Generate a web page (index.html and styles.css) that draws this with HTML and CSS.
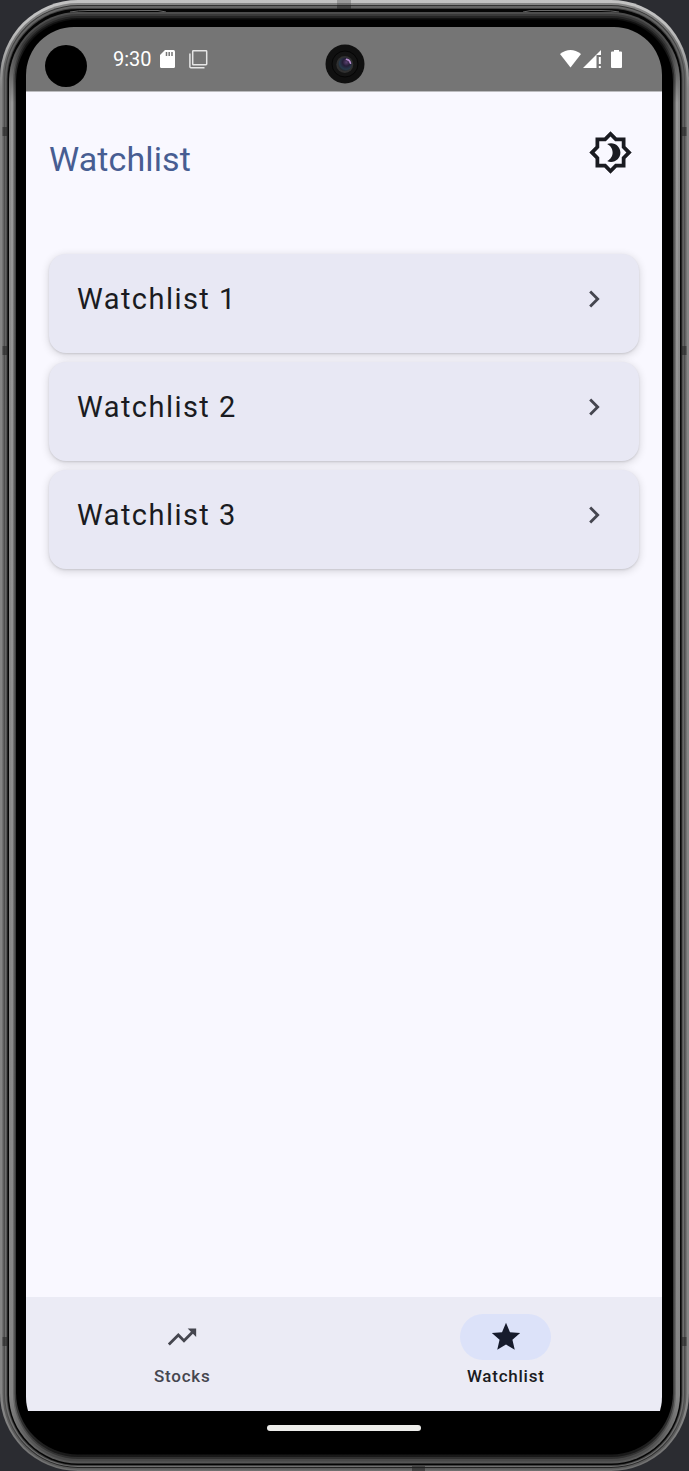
FILE: index.html
```html
<!DOCTYPE html>
<html lang="en">
<head>
<meta charset="utf-8">
<title>Watchlist</title>
<link rel="stylesheet" href="styles.css">
</head>
<body>
<div class="device">
  <svg class="bezel" width="689" height="1471" viewBox="0 0 689 1471" aria-hidden="true">
    <defs>
      <linearGradient id="g0" x2="0" y2="1471" gradientUnits="userSpaceOnUse"><stop offset="0" stop-color="#c2c2c2"/><stop offset=".02" stop-color="#bdbdbd"/><stop offset=".06" stop-color="#858585"/><stop offset=".96" stop-color="#858585"/><stop offset="1" stop-color="#6e6e6e"/></linearGradient>
      <linearGradient id="g1" x2="0" y2="1471" gradientUnits="userSpaceOnUse"><stop offset="0" stop-color="#888"/><stop offset=".05" stop-color="#646464"/><stop offset="1" stop-color="#5c5c5c"/></linearGradient>
      <linearGradient id="g2" x2="0" y2="1471" gradientUnits="userSpaceOnUse"><stop offset="0" stop-color="#303030"/><stop offset=".05" stop-color="#4e4e4e"/><stop offset=".96" stop-color="#4e4e4e"/><stop offset="1" stop-color="#222"/></linearGradient>
      <linearGradient id="g3" x2="0" y2="1471" gradientUnits="userSpaceOnUse"><stop offset="0" stop-color="#666"/><stop offset=".05" stop-color="#606060"/><stop offset="1" stop-color="#707070"/></linearGradient>
      <linearGradient id="g4" x2="0" y2="1471" gradientUnits="userSpaceOnUse"><stop offset="0" stop-color="#4c4c4c"/><stop offset=".03" stop-color="#4c4c4c"/><stop offset=".07" stop-color="#8c8c8c"/><stop offset=".95" stop-color="#858585"/><stop offset="1" stop-color="#505050"/></linearGradient>
      <linearGradient id="g5" x2="0" y2="1471" gradientUnits="userSpaceOnUse"><stop offset="0" stop-color="#383838"/><stop offset=".03" stop-color="#383838"/><stop offset=".07" stop-color="#999"/><stop offset=".95" stop-color="#858585"/><stop offset=".99" stop-color="#484848"/></linearGradient>
      <linearGradient id="g6" x2="0" y2="1471" gradientUnits="userSpaceOnUse"><stop offset="0" stop-color="#242424"/><stop offset=".03" stop-color="#242424"/><stop offset=".07" stop-color="#777"/><stop offset=".95" stop-color="#686868"/><stop offset=".99" stop-color="#303030"/></linearGradient>
      <linearGradient id="g7" x2="0" y2="1471" gradientUnits="userSpaceOnUse"><stop offset="0" stop-color="#101010"/><stop offset=".03" stop-color="#101010"/><stop offset=".07" stop-color="#444"/><stop offset=".95" stop-color="#3c3c3c"/><stop offset=".99" stop-color="#181818"/></linearGradient>
    </defs>
    <rect width="689" height="1471" rx="78" fill="url(#g0)"/>
    <rect x="2.5" y="3" width="684" height="1466.500" rx="75.500" fill="url(#g1)"/>
    <rect x="4" y="5" width="681" height="1463" rx="74" fill="url(#g2)"/>
    <rect x="5" y="6" width="679" height="1461" rx="73" fill="url(#g3)"/>
    <rect x="6.500" y="8" width="676" height="1458" rx="71.500" fill="#404040"/>
    <rect x="7.500" y="9" width="674" height="1456" rx="70.500" fill="#050505"/>
    <path d="M70 12Q78 10.500 88 10.500H158L166 12M619 12Q611 10.500 601 10.500H531L523 12" fill="none" stroke="#666" stroke-width="1"/>
    <rect x="9" y="12" width="671" height="1451.500" rx="69" fill="url(#g4)"/>
    <rect x="11" y="14" width="667" height="1447.500" rx="67" fill="url(#g5)"/>
    <rect x="13" y="16" width="663" height="1443" rx="65" fill="url(#g6)"/>
    <rect x="14.500" y="18" width="660" height="1439" rx="63" fill="url(#g7)"/>
    <rect x="16" y="19.500" width="657" height="1435" rx="62" fill="#000"/>
    <path d="M2.500 127h5v9h-5zM2.500 346h5v9h-5zM2.500 1337h5v9h-5zM681.500 127h5v9h-5zM681.500 346h5v9h-5zM681.500 1337h5v9h-5zM337 5h14v4h-14zM412 1466h13v5h-13z" fill="#222" fill-opacity=".55"/>
    <path d="M337 0h14v5h-14z" fill="#222" fill-opacity=".25"/>
  </svg>

  <div class="screen">
    <header class="status">
      <span class="cutout"></span>
      <span class="time">9:30</span>
      <svg class="sd" width="15" height="18" viewBox="0 0 15 18"><path d="M5 0h8.500Q15 0 15 1.500v15Q15 18 13.500 18h-12Q0 18 0 16.500V5z" fill="#fff"/><path d="M6.500 2v4M9.200 2v4M12 2v4" stroke="#757575" stroke-width="1.500"/></svg>
      <svg class="copy" width="19" height="19" viewBox="0 0 19 19" fill="none" stroke="#e6e6e6" stroke-width="1.500"><rect x="3.700" y=".8" width="14" height="14" rx=".7"/><path d="M.9 3.500v13.200q0 1 1 1H15.500"/></svg>
      <svg class="camera" width="40" height="40" viewBox="0 0 40 40">
        <defs>
          <radialGradient id="lens" cx=".6" cy=".35" r=".7"><stop offset="0" stop-color="#59406f"/><stop offset=".4" stop-color="#241e36"/><stop offset=".75" stop-color="#26394a"/><stop offset="1" stop-color="#222"/></radialGradient>
        </defs>
        <circle cx="20" cy="20" r="19.500" fill="#101010"/>
        <circle cx="20" cy="20" r="13" fill="#141414" stroke="#050505"/>
        <circle cx="19.800" cy="20.500" r="8.500" fill="#303030"/>
        <circle cx="20" cy="20.300" r="6.700" fill="url(#lens)"/>
        <path d="M21.500 15.300q3.500 .7 4 4" fill="none" stroke="#b58bcb" stroke-width="1.600" stroke-linecap="round"/>
      </svg>
      <svg class="signals" width="63" height="18" viewBox="0 0 63 18" fill="#fff"><path d="M0 4Q10.500-4 21 4L10.500 17.500z"/><path d="M23 18L41 0v5h-4.500v13z"/><path d="M38.800 7h2v7h-2zM38.800 16h2v2h-2z"/><path d="M51 2.500Q51 1.500 52 1.500h2V0h5v1.500h2q1 0 1 1V17q0 1-1 1h-9q-1 0-1-1z"/></svg>
    </header>

    <main class="content">
      <div class="titlebar">
        <h1 class="title">Watchlist</h1>
        <svg class="theme" width="45" height="45" viewBox="0 0 24 24" fill="#1a1b21"><path fill-rule="evenodd" d="M20 8.690V4h-4.690L12 .69 8.690 4H4v4.690L.69 12 4 15.310V20h4.690L12 23.310 15.310 20H20v-4.690L23.310 12zM18 14.480V18h-3.520L12 20.480 9.520 18H6v-3.520L3.520 12 6 9.520V6h3.520L12 3.520 14.480 6H18v3.520L20.480 12z"/><path d="M12.290 7c-.74 0-1.450.17-2.080.46 1.720.79 2.920 2.530 2.920 4.540s-1.200 3.750-2.920 4.540c.63.29 1.340.46 2.080.46 2.760 0 5-2.240 5-5s-2.240-5-5-5z"/></svg>
      </div>
      <div class="list">
        <div class="card"><span>Watchlist 1</span><svg width="34" height="34" viewBox="0 0 24 24"><path d="M10 6L8.590 7.410 13.170 12l-4.580 4.590L10 18l6-6z" fill="#45464f"/></svg></div>
        <div class="card"><span>Watchlist 2</span><svg width="34" height="34" viewBox="0 0 24 24"><path d="M10 6L8.590 7.410 13.170 12l-4.580 4.590L10 18l6-6z" fill="#45464f"/></svg></div>
        <div class="card"><span>Watchlist 3</span><svg width="34" height="34" viewBox="0 0 24 24"><path d="M10 6L8.590 7.410 13.170 12l-4.580 4.590L10 18l6-6z" fill="#45464f"/></svg></div>
      </div>
    </main>

    <nav class="nav">
      <div class="tab">
        <span class="pill"><svg width="34" height="34" viewBox="0 0 24 24"><path d="M16 6l2.290 2.290-4.880 4.880-4-4L2 16.590 3.410 18l6-6 4 4 6.300-6.290L22 12V6z" fill="#45464f"/></svg></span>
        <span class="label">Stocks</span>
      </div>
      <div class="tab active">
        <span class="pill"><svg width="34" height="34" viewBox="0 0 24 24"><path d="M12 17.270L18.180 21l-1.640-7.030L22 9.240l-7.190-.61L12 2 9.190 8.630 2 9.240l5.460 4.730L5.820 21z" fill="#161b2c"/></svg></span>
        <span class="label">Watchlist</span>
      </div>
    </nav>
    <footer class="gesture"><span class="handle"></span></footer>
  </div>
</div>
</body>
</html>
```
FILE: styles.css
```css
* {
  box-sizing: border-box;
}

body {
  margin: 0;
  background: #2b2c31;
  font-family: Roboto, sans-serif;
}

svg {
  display: block;
  flex: none;
}

.device {
  position: relative;
  width: 689px;
  height: 1471px;
  padding: 27px 27px 26px 26px;
  overflow: hidden;
}

/* Metal frame drawn behind the screen */
.bezel {
  position: absolute;
  inset: 0;
}

.screen {
  position: relative;
  display: flex;
  flex-direction: column;
  height: 100%;
  border-radius: 48px;
  overflow: hidden;
}

.status {
  position: relative;
  flex: none;
  display: flex;
  align-items: center;
  height: 65px;
  padding: 0 39px 0 19px;
  border-bottom: 1px solid #bcbcbf;
  background: #757575;
  color: #fff;
}

.cutout {
  width: 42px;
  height: 42px;
  margin-top: 14px;
  border-radius: 50%;
  background: #000;
}

.time {
  margin-left: 26px;
  font-size: 20px;
  line-height: 24px;
}

.sd {
  margin-left: 8px;
}

.copy {
  margin-left: 14.5px;
}

.camera {
  position: absolute;
  left: 298.5px;
  top: 16.5px;
}

.signals {
  margin-left: auto;
}

.content {
  flex: 1;
  padding: 38px 23px 0;
  background: #f9f8ff;
}

.titlebar {
  display: flex;
  justify-content: space-between;
  height: 124px;
  padding-right: 6px;
}

.title {
  margin: 8px 0 0;
  color: #475d92;
  font-size: 34px;
  font-weight: 400;
  line-height: 42px;
  letter-spacing: .1px;
}

.list {
  display: flex;
  flex-direction: column;
  gap: 9px;
}

.card {
  display: flex;
  justify-content: space-between;
  height: 99px;
  padding: 28px 28px 0 28px;
  border-radius: 17px;
  background: #e8e8f4;
  box-shadow: 0 1px 2px rgba(0, 0, 0, .1), 0 2px 9px rgba(0, 0, 0, .16);
  color: #1a1b21;
  font-size: 29px;
  line-height: 34px;
  letter-spacing: 1.45px;
}

.nav {
  flex: none;
  display: flex;
  gap: 11px;
  height: 114px;
  padding-top: 17px;
  background: #ebebf5;
}

.tab {
  flex: 1;
  display: flex;
  flex-direction: column;
  align-items: center;
  color: #45464f;
}

.pill {
  display: grid;
  place-items: center;
  width: 91px;
  height: 46px;
  border-radius: 23px;
}

.label {
  margin-top: 5px;
  font-size: 17px;
  font-weight: 500;
  line-height: 22px;
  letter-spacing: .75px;
}

.active {
  color: #1a1b21;
}

.active .pill {
  background: #dce2f9;
}

.gesture {
  flex: none;
  height: 34px;
  padding-top: 14px;
  background: #000;
}

.handle {
  display: block;
  width: 154px;
  height: 6px;
  margin: 0 auto;
  border-radius: 3px;
  background: #ececea;
}
```
